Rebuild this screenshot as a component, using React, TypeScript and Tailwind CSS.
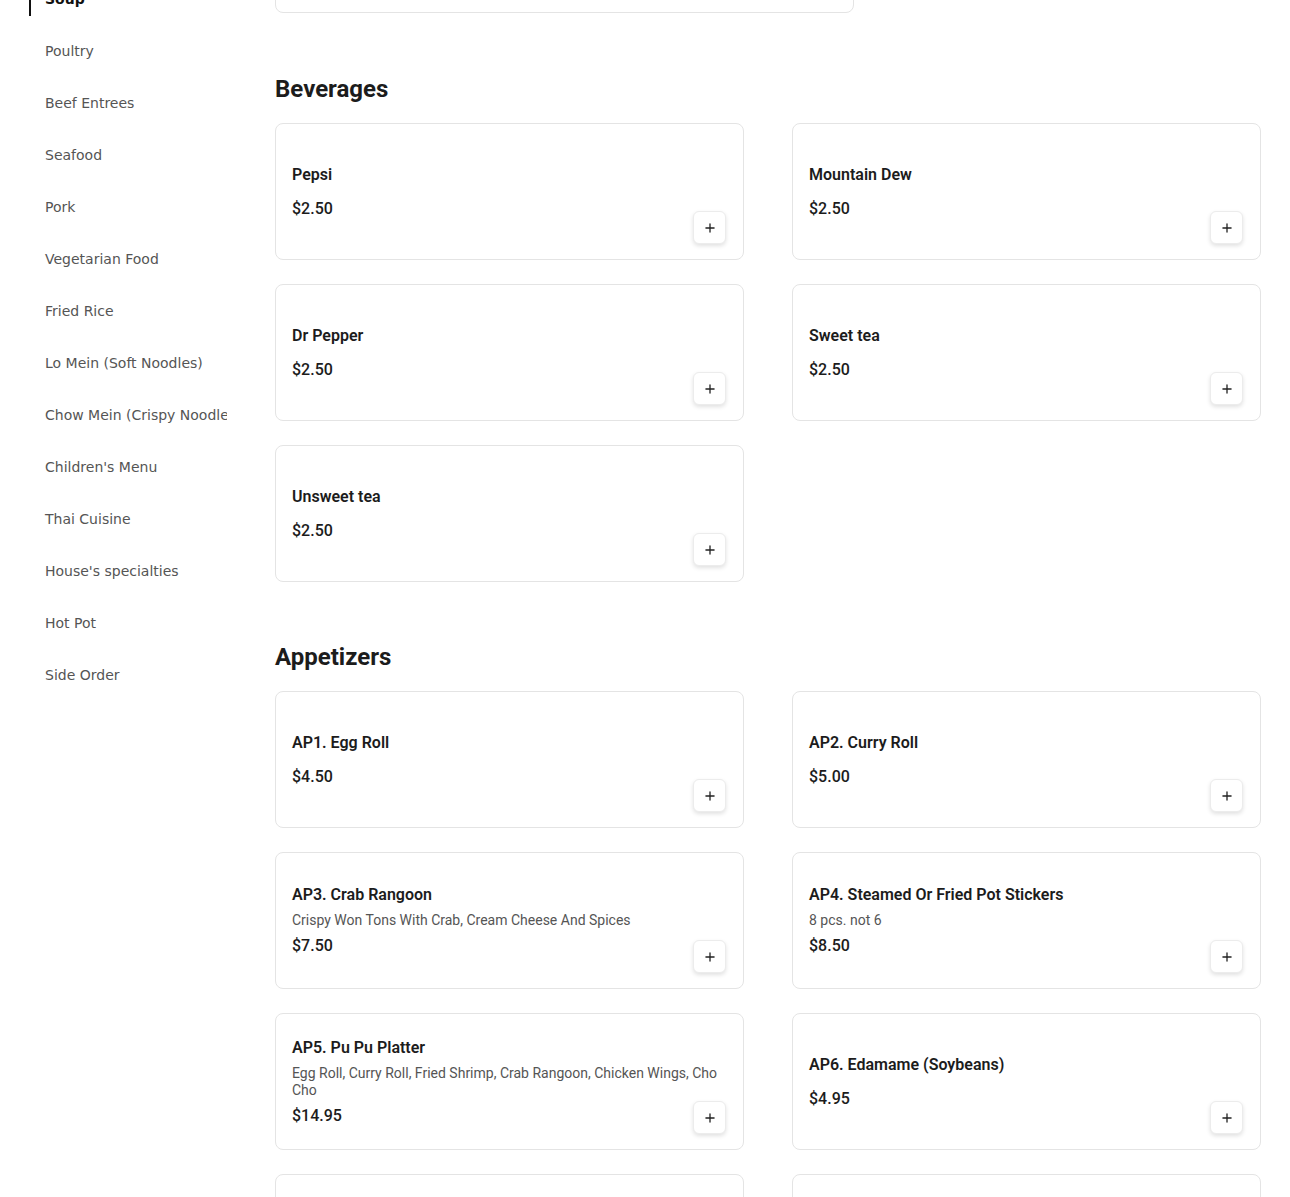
import { Plus } from 'lucide-react'

type Item = { name: string; price: string; desc?: string }

const categories = [
  'Soup',
  'Poultry',
  'Beef Entrees',
  'Seafood',
  'Pork',
  'Vegetarian Food',
  'Fried Rice',
  'Lo Mein (Soft Noodles)',
  'Chow Mein (Crispy Noodles)',
  "Children's Menu",
  'Thai Cuisine',
  "House's specialties",
  'Hot Pot',
  'Side Order',
]

const beverages: Item[] = [
  { name: 'Pepsi', price: '$2.50' },
  { name: 'Mountain Dew', price: '$2.50' },
  { name: 'Dr Pepper', price: '$2.50' },
  { name: 'Sweet tea', price: '$2.50' },
  { name: 'Unsweet tea', price: '$2.50' },
]

const appetizers: Item[] = [
  { name: 'AP1. Egg Roll', price: '$4.50' },
  { name: 'AP2. Curry Roll', price: '$5.00' },
  { name: 'AP3. Crab Rangoon', price: '$7.50', desc: 'Crispy Won Tons With Crab, Cream Cheese And Spices' },
  { name: 'AP4. Steamed Or Fried Pot Stickers', price: '$8.50', desc: '8 pcs. not 6' },
  {
    name: 'AP5. Pu Pu Platter',
    price: '$14.95',
    desc: 'Egg Roll, Curry Roll, Fried Shrimp, Crab Rangoon, Chicken Wings, Cho Cho',
  },
  { name: 'AP6. Edamame (Soybeans)', price: '$4.95' },
  { name: 'AP7. Fried Wonton', price: '$6.95' },
  { name: 'AP8. Chicken Wings', price: '$9.95' },
]

function MenuCard({ item }: { item: Item }) {
  return (
    <div className="relative h-[137px] rounded-lg border border-[#e4e4e4] bg-white p-4 flex items-center">
      <div className="flex flex-col min-w-0 w-full">
        <div className="text-[16px] leading-6 font-semibold text-[#1c1c1c] mb-[5px]">{item.name}</div>
        {item.desc && <div className="text-[14px] leading-[17px] text-[#555]">{item.desc}</div>}
        <div className="text-[16px] leading-6 font-medium text-[#1c1c1c] mt-[5px]">{item.price}</div>
      </div>
      {/* add button sits over the card's bottom-right corner */}
      <button className="absolute right-[17px] bottom-[15px] w-[33px] h-[33px] rounded-md border border-[#ececec] bg-white shadow-[0_2px_4px_rgba(0,0,0,0.12)] flex items-center justify-center text-[#222]">
        <Plus size={14} strokeWidth={2.25} />
      </button>
    </div>
  )
}

function Section({ title, items, className }: { title: string; items: Item[]; className: string }) {
  return (
    <section className={className}>
      <h2 className="text-[24px] leading-8 font-bold text-[#1c1c1c] mb-[18px]">{title}</h2>
      <div className="grid grid-cols-2 gap-x-12 gap-y-6">
        {items.map((item) => (
          <MenuCard key={item.name} item={item} />
        ))}
      </div>
    </section>
  )
}

export default function App() {
  return (
    <div className="h-[1197px] overflow-hidden bg-white flex" style={{ fontFamily: 'Roboto, "Liberation Sans", sans-serif' }}>
      {/* Category nav */}
      <aside className="w-[227px] shrink-0 pl-[29px] overflow-hidden">
        <nav className="-mt-[18px] flex flex-col gap-[18px]" style={{ fontFamily: '"DejaVu Sans", sans-serif' }}>
          {categories.map((c, i) => (
            <div
              key={c}
              className={
                i === 0
                  ? 'h-[34px] flex items-center border-l-2 border-[#111] pl-[14px] text-[14px] font-bold text-[#111] whitespace-nowrap'
                  : 'h-[34px] flex items-center pl-[16px] text-[14px] text-[#555] whitespace-nowrap'
              }
            >
              {c}
            </div>
          ))}
        </nav>
      </aside>

      {/* Menu */}
      <main className="ml-[48px] w-[986px]">
        <div className="-mt-[124px] h-[137px] w-[579px] rounded-lg border border-[#e4e4e4]" />
        <Section title="Beverages" items={beverages} className="mt-[60px]" />
        <Section title="Appetizers" items={appetizers} className="mt-[59px]" />
      </main>
    </div>
  )
}
